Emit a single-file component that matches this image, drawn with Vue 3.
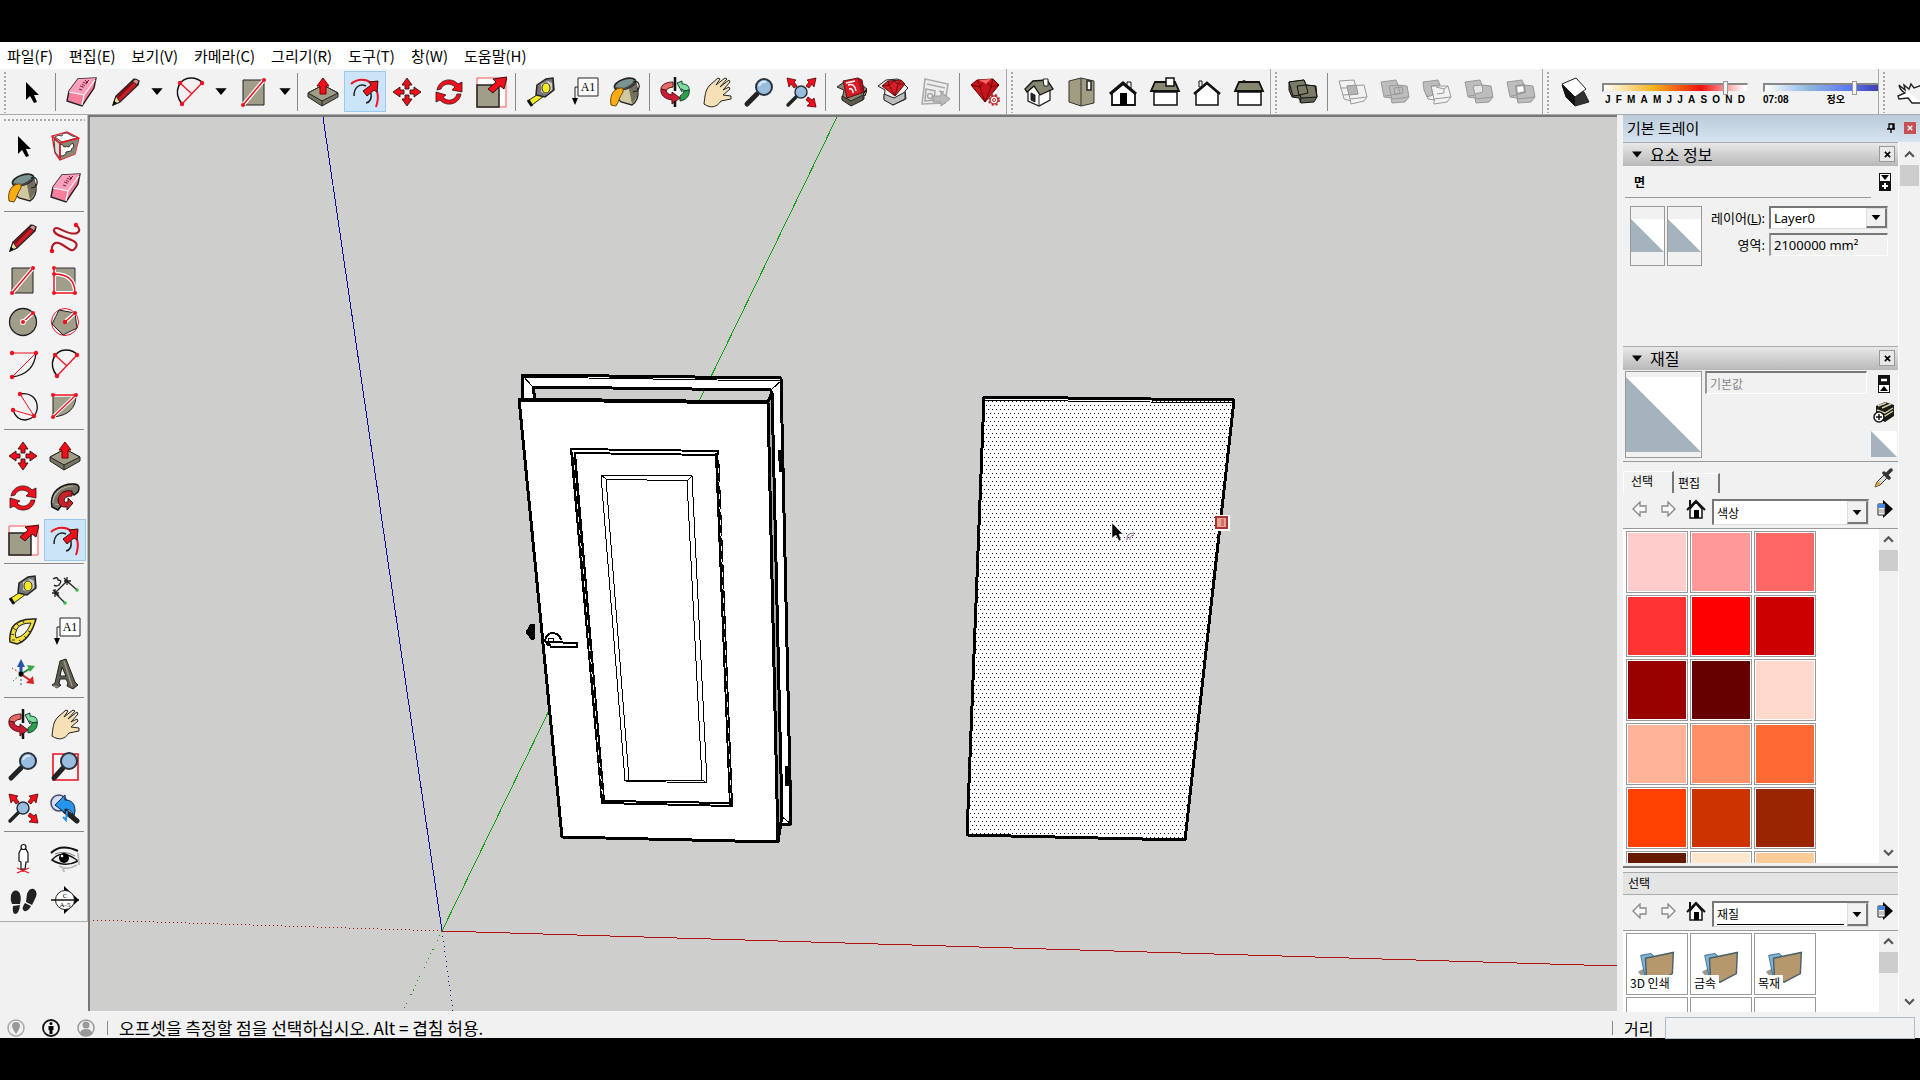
<script setup>
import { ref } from 'vue'

const menus = ['파일(F)', '편집(E)', '보기(V)', '카메라(C)', '그리기(R)', '도구(T)', '창(W)', '도움말(H)']

// 상단 도구 모음
const toolGroups = [
  [
    ['select'],
    ['eraser', 'pencil+', 'arc2+', 'rect+'],
    ['push', 'offset', 'move', 'rotate', 'scale'],
    ['tape', 'text', 'paint'],
    ['orbit', 'pan', 'zoom', 'extents'],
    ['warehouse', 'extension', 'layout'],
    ['ruby'],
  ],
  [['iso', 'top', 'front', 'right', 'back', 'left']],
  [['shell'], ['intersect', 'union', 'subtract', 'trim', 'split']],
]

// 왼쪽 큰 도구 세트
const palette = [
  ['select', 'component', 'paint', 'eraser'],
  ['pencil', 'freehand', 'rect', 'rotrect', 'circle', 'polygon', 'arc', 'arc2', 'arc3', 'pie'],
  ['move', 'push', 'rotate', 'follow', 'scale', 'offset'],
  ['tape', 'dimension', 'protractor', 'text', 'axes', 'text3d'],
  ['orbit', 'pan', 'zoom', 'zoomwin', 'extents', 'previous'],
  ['position', 'look', 'walk', 'section'],
]

const activeTool = ref('offset')
const month = ref(86)
const hour = ref(81)
const months = 'JFMAMJJASOND'.split('')

const swatches = [
  '#ffcccc', '#ff9999', '#ff6666',
  '#ff3333', '#ff0000', '#cc0000',
  '#990000', '#660000', '#ffd9cc',
  '#ffb399', '#ff8f66', '#ff6933',
  '#ff4000', '#cc3300', '#992600',
  '#661a00', '#ffe6cc', '#ffcc99',
]
const folders = ['3D 인쇄', '금속', '목재', '', '', '']

const name = t => t.replace('+', '')
</script>

<template>
  <div class="app">
    <svg class="defs" aria-hidden="true">
      <defs>
        <symbol id="select" viewBox="0 0 32 32"><path d="M11 6v18l4-4 4 7 3-1-3-7h5z" /></symbol>
        <symbol id="eraser" viewBox="0 0 32 32">
          <path d="M13 3 31 2 29 12 17 30 2 25 4 15z" fill="#f77f9c" stroke="#222" stroke-width="1.4" />
          <path d="M13 3 31 2 19 19 4 15z" fill="#ff9fbb" />
          <path d="M4 16l15 3-2 10M19 19 30 4" fill="none" stroke="#fff" stroke-width="1.2" />
          <path d="M14 13l3 1M15 10q4 0 3 2M17 8l3 2M18 6l4 2M20 4l3 3M21 7l3-3" fill="none" stroke="#72243c" />
        </symbol>
        <symbol id="pencil" viewBox="0 0 32 32">
          <path d="M3 29 6 20 24 3 29 5 28 9 10 26z" fill="#c91c25" stroke="#222" stroke-width="1.3" />
          <path d="M3 29 6 20 10 26z" fill="#eedca4" stroke="#222" />
          <path d="M8 21 24 5" stroke="#771118" stroke-width="2" />
          <path d="M3 29l1-4 3 2z" /><path d="M22 5l4-2 3 2-2 4z" fill="#d98e8b" stroke="#222" />
        </symbol>
        <symbol id="arc2" viewBox="0 0 32 32">
          <path d="M8 28C-2 15 6 2 17 2q7 0 12 5" fill="none" stroke="#111" stroke-width="1.5" />
          <path d="M8 28 28 7M6 7l12 11" stroke="#e12" stroke-width="1.3" />
          <g fill="#e12"><circle cx="8" cy="28" r="2.2" /><circle cx="28" cy="7" r="2.2" /><circle cx="6" cy="7" r="2.2" /></g>
        </symbol>
        <symbol id="rect" viewBox="0 0 32 32">
          <path d="M5 4h21v25H5z" fill="#a09d88" stroke="#222" />
          <path d="M5 29 26 4" stroke="#fff" stroke-width="4" /><path d="M5 29 26 4" stroke="#e12" stroke-width="1.5" />
          <g fill="#e12"><circle cx="5" cy="29" r="2" /><circle cx="26" cy="4" r="2" /></g>
        </symbol>
        <symbol id="push" viewBox="0 0 32 32">
          <path d="M1 17 16 9l15 8v4L15 30 1 21z" fill="#777563" stroke="#222" />
          <path d="M1 17 16 9l15 8-16 8z" fill="#a09d88" stroke="#222" /><path d="M15 25v5" stroke="#222" />
          <path d="M16 2l6 8h-3v8h-6v-8h-3z" fill="#f0101c" stroke="#700" />
        </symbol>
        <symbol id="offset" viewBox="0 0 32 32">
          <path d="M2 8C15-3 35 9 27 31" fill="none" stroke="#e12" stroke-width="2" />
          <path d="M5 20c0-9 6-13 12-10m5 7c1 6-1 9-5 10" fill="none" stroke="#222" stroke-width="1.5" />
          <path d="M29 5l-1 11-3-2-7 6-4-5 8-6-2-3z" fill="#f0101c" stroke="#311" />
        </symbol>
        <symbol id="move" viewBox="0 0 32 32">
          <g fill="#f0101c" stroke="#311" stroke-width=".9">
            <path d="M16 2l5 7h-3v4h-4V9h-3z" /><path d="M16 30l5-7h-3v-4h-4v4h-3z" />
            <path d="M2 16l7-5v3h4v4H9v3z" /><path d="M30 16l-7-5v3h-4v4h4v3z" />
          </g>
        </symbol>
        <symbol id="rotate" viewBox="0 0 32 32">
          <g fill="#f0101c" stroke="#311" stroke-width=".8">
            <path d="M4 14C6 3 19 1 25 8l4-2v10l-10-2 3-3C17 6 10 8 8 13z" />
            <path d="M28 18c-2 11-15 13-21 6l-4 2V16l10 3-3 2c4 5 12 4 14-3z" />
          </g>
        </symbol>
        <symbol id="scale" viewBox="0 0 32 32">
          <path d="M2 2h29v29H2z" fill="#fff" stroke="#f55" /><path d="M2 9h22v22H2z" fill="#a09d88" stroke="#222" stroke-width="1.5" />
          <path d="M32 1l-3 12-4-3-7 7-5-4 8-7-3-3z" fill="#f0101c" stroke="#311" />
        </symbol>
        <symbol id="tape" viewBox="0 0 32 32">
          <path d="M4 24l11-7 4 3L7 29z" fill="#f4e92a" stroke="#222" /><path d="M3 24l4 6" stroke="#111" stroke-width="3" />
          <path d="M12 9l9-6 7-1 1 12-9 7-9-2z" fill="#777" stroke="#222" stroke-width="1.5" />
          <path d="M16 8l7-3 4 2v7l-6 4-5-2z" fill="#ccc" /><ellipse cx="21" cy="12" rx="4" ry="5" fill="#f4ec20" stroke="#333" />
        </symbol>
        <symbol id="text" viewBox="0 0 32 32">
          <path d="M11 2h20v18H11z" fill="#fff" stroke="#222" /><path d="M11 11H8v13" fill="none" stroke="#222" />
          <path d="M5 22h6l-3 7z" /><text x="21" y="15" font-size="12" font-family="Liberation Serif, serif" text-anchor="middle">A1</text>
        </symbol>
        <symbol id="paint" viewBox="0 0 32 32">
          <path d="M6 10q1 13 6 16l11 3q7-5 6-14L26 4z" fill="#cfc8a0" stroke="#222" stroke-width="1.3" />
          <path d="M20 13l3 15 5-7V10l-2-5z" fill="#746f5c" />
          <ellipse cx="16" cy="8" rx="11" ry="5" fill="#7b9391" stroke="#222" stroke-width="1.6" transform="rotate(-18 16 8)" />
          <path d="M7 12q9 4 19-6" fill="none" stroke="#444" stroke-width="2" />
          <path d="M24 6c6-3 8 5 4 9l-4 1" fill="none" stroke="#222" stroke-width="1.2" />
          <path d="M14 12C6 11 0 18 2 29l5 1c3-4 3-9 7-14z" fill="#fbac12" stroke="#6b4a08" />
        </symbol>
        <symbol id="orbit" viewBox="0 0 32 32">
          <path d="M14 6C7 6 2 9 2 13l5 4q-1-5 7-6z" fill="#e56a6a" stroke="#511" />
          <path d="M18 7l5-2v3c6 0 8 3 7 8l-6-2q-2-2-1-1v3z" fill="#7edb9e" stroke="#143" />
          <path d="M30 14c1 6-3 10-9 11v-5q4-2 4-5z" fill="#2b9f4b" stroke="#143" />
          <path d="M2 13c-1 6 4 10 11 11v4l8-6-8-6v3q-6-1-6-5z" fill="#c91c35" stroke="#511" />
          <path d="M16 1v14M16 25v6" stroke="#111" stroke-width="2.5" />
        </symbol>
        <symbol id="pan" viewBox="0 0 32 32">
          <path d="M3 28C4 20 4 14 9 9l8-7 2 1-4 6L24 2l2 1-7 8 9-7 1 2-7 8 6-3 1 2-7 6 8 1v3l-10 2c-4 6-10 8-17 3z" fill="#f6e0b5" stroke="#222" />
        </symbol>
        <symbol id="zoom" viewBox="0 0 32 32">
          <path d="M4 28l10-10" stroke="#222" stroke-width="5" stroke-linecap="round" />
          <circle cx="21" cy="11" r="8" fill="#98bddf" stroke="#2a333c" stroke-width="2" /><path d="M16 10q2-5 7-4" fill="none" stroke="#d7eaff" stroke-width="2" />
        </symbol>
        <symbol id="extents" viewBox="0 0 32 32">
          <path d="M3 29l9-9" stroke="#222" stroke-width="3.5" stroke-linecap="round" />
          <circle cx="16" cy="16" r="6" fill="#98bddf" stroke="#2a333c" stroke-width="1.5" />
          <g fill="#f0101c" stroke="#500" stroke-width=".8">
            <path d="M2 2l9 2-2 2 3 4-3 2-3-4-2 3z" /><path d="M31 2l-9 2 2 2-3 4 3 2 3-4 2 3z" /><path d="M31 31l-2-9-2 2-4-3-2 3 4 3-3 3z" />
          </g>
        </symbol>
        <symbol id="warehouse" viewBox="0 0 32 32">
          <path d="M2 11l7 3-2 9 9 6 13-6v-7l3-3-6-5-17-2z" fill="#8b8878" stroke="#222" />
          <path d="M8 5 23 2l4 15-15 5z" fill="#d91d28" stroke="#511" /><path d="M23 2l4 2 2 12-3 1" fill="#a8131d" stroke="#511" />
          <path d="M13 9q7-2 8 6M14 13q4-1 4 4M11 7l9-2" fill="none" stroke="#fff" stroke-width="1.5" />
          <path d="M7 20l9 5 12-6v5l-12 6-9-6z" fill="#5d5b4e" stroke="#222" /><path d="M28 18l4-4-2 6z" fill="#8b8878" stroke="#222" />
        </symbol>
        <symbol id="extension" viewBox="0 0 32 32">
          <path d="M1 10l7 4-1 9 9 6 13-6-1-8 3-3-6-6-4-3-12 1z" fill="#eee" stroke="#222" />
          <path d="M5 10l6-5 13-1 4 4-10 12z" fill="#d91d28" stroke="#511" /><path d="M5 10l7-1 6 11 3-12 7 0M11 5l1 4 5-4 4 3 3-4" fill="none" stroke="#611" />
          <path d="M7 18l10 4 11-6v7l-12 6-9-5z" fill="#bbb" stroke="#222" />
        </symbol>
        <symbol id="layout" viewBox="0 0 32 32">
          <g fill="#eee" stroke="#aaa" stroke-width="1.6"><path d="M6 3l23 5-3 19-23 1z" /><path d="M8 8l18 4M7 13l9 2-1 9-9 1zM20 15l5 1" /><circle cx="11" cy="20" r="2.5" /></g>
          <path d="M14 20h8v-4l9 7-9 7v-4h-8z" fill="#bbb" stroke="#999" />
        </symbol>
        <symbol id="ruby" viewBox="0 0 32 32">
          <path d="M2 9l6-5 16-1 6 6-14 17z" fill="#c6141f" stroke="#600" />
          <path d="M2 9l9 2 5 15 6-15 8-2M8 4l3 7 5-7 6 7 2-8" fill="none" stroke="#700" /><path d="M10 4l12-1-5 5z" fill="#f46a6a" />
          <circle cx="25" cy="24" r="5" fill="#f2f2f2" stroke="#b33" stroke-width="2" stroke-dasharray="2 2" /><circle cx="25" cy="24" r="4" fill="#f2f2f2" stroke="#b33" stroke-width="1.5" /><circle cx="25" cy="24" r="1.5" fill="none" stroke="#b33" />
        </symbol>
        <symbol id="iso" viewBox="0 0 32 32">
          <path d="M5 14v11l11 5 11-6V13L15 7z" fill="#fff" stroke="#222" stroke-width="1.3" /><path d="M16 19v11M8 17l4 2v7l-4-2z" fill="#222" stroke="#222" />
          <path d="M2 13 10 5l14-1 6 9-13 6-6-9-7 6z" fill="#87866f" stroke="#111" stroke-width="1.3" /><path d="M20 3h5v7h-4z" fill="#fff" stroke="#222" />
        </symbol>
        <symbol id="top" viewBox="0 0 32 32">
          <path d="M4 5l12-3 13 3v22l-13 3-12-4z" fill="#a09d82" stroke="#333" /><path d="M16 2v28" stroke="#333" /><path d="M22 5h4v9h-4z" fill="#fff" stroke="#222" stroke-width="1.5" />
        </symbol>
        <symbol id="front" viewBox="0 0 32 32">
          <path d="M20 6h4v6h-4z" fill="#fff" stroke="#111" /><path d="M5 17v12h23V17L16 8z" fill="#fff" stroke="#111" stroke-width="1.8" />
          <path d="M3 18 16 7l13 11" fill="none" stroke="#111" stroke-width="3" /><path d="M13 17h7v12h-7z" />
        </symbol>
        <symbol id="right" viewBox="0 0 32 32">
          <path d="M5 16h23v13H5z" fill="#fff" stroke="#111" stroke-width="1.5" /><path d="M2 15 6 6h20l4 9z" fill="#87866f" stroke="#111" stroke-width="1.8" />
          <path d="M17 2h8v8h-8z" fill="#fff" stroke="#111" stroke-width="1.5" />
        </symbol>
        <symbol id="back" viewBox="0 0 32 32">
          <path d="M8 5h3v6H8z" fill="#fff" stroke="#111" /><path d="M5 17v12h22V17L16 7z" fill="#fff" stroke="#111" stroke-width="1.5" /><path d="M3 18 16 7l13 11" fill="none" stroke="#111" stroke-width="2.5" />
        </symbol>
        <symbol id="left" viewBox="0 0 32 32">
          <path d="M8 6q3-3 6 0" fill="none" stroke="#111" /><path d="M5 16h23v13H5z" fill="#fff" stroke="#111" stroke-width="1.5" />
          <path d="M2 15 6 6h20l4 9z" fill="#87866f" stroke="#111" stroke-width="1.8" />
        </symbol>
        <symbol id="shell" viewBox="0 0 32 32">
          <path d="M2 6 17 4l2 5 10 1 1 11-3 5-13 1-2-5-7-1-3-7z" fill="#626252" stroke="#111" />
          <path d="M2 6 17 4l2 5 9 1 2 11-16 1-1-3-7 1z" fill="#7c7b68" stroke="#111" /><path d="M10 10l9-1 2 8-9 2zM14 22l-1 5" fill="none" stroke="#111" />
        </symbol>
        <symbol id="intersect" viewBox="0 0 32 32">
          <g fill="none" stroke="#999"><path d="M2 5l15-1 4 14-15 1zM10 10l17-1 3 12-17 2zM6 19l1 4 7 2M30 21l-3 4-13 3-1-5M3 12h7" /><path d="M10 10l9-1 2 9-9 1z" fill="#b5b5b5" /></g>
        </symbol>
        <symbol id="union" viewBox="0 0 32 32">
          <g stroke="#999" fill="#bdbdbd"><path d="M2 6 17 4l2 5 9 1 2 11-4 5-13 1-1-5-7-1z" /><path d="M30 21l-17 2-1-4-6 1M10 10l9-1 2 8-9 2zM15 12l8-1 1 6-8 2z" fill="none" /></g>
        </symbol>
        <symbol id="subtract" viewBox="0 0 32 32">
          <g stroke="#999" fill="none"><path d="M2 6 17 4l2 5-9 1 2 9-6 2-3-7z" fill="#bdbdbd" /><path d="M10 10l17 0 3 11-17 2zM15 11l8 2 4-3M16 18l7-1v-4M30 21l-4 5-13 2v-5" /><path d="M6 19l1 4 7 1" /></g>
        </symbol>
        <symbol id="trim" viewBox="0 0 32 32">
          <g stroke="#999" fill="#bdbdbd"><path d="M2 6 17 4l2 5 9 1 2 11-4 5-13 1-1-5-7-1z" /><path d="M10 10l9-1 1 7-8 2z" fill="#e6e6e6" /><path d="M30 21l-17 2-1-4-6 1" fill="none" /></g>
        </symbol>
        <symbol id="split" viewBox="0 0 32 32">
          <g stroke="#999" fill="#bdbdbd"><path d="M2 6 17 4l2 5 9 1 2 11-4 5-13 1-1-5-7-1z" /><path d="M11 10l8-1 1 7-8 2z" fill="#fff" stroke-width="2" /><path d="M30 21l-17 2-1-4-6 1" fill="none" /></g>
        </symbol>
        <symbol id="shadow" viewBox="0 0 32 32">
          <path d="M3 9l4 12 9 9 14-4-5-10z" fill="#333" stroke="#222" /><path d="M3 8l14-6 10 11-11 8z" fill="#fff" stroke="#222" />
          <path d="M3 9l4 12 9 9v-9z" fill="#111" />
        </symbol>
        <symbol id="glove" viewBox="0 0 32 32">
          <path d="M4 9l6 5-1-5 5 4 2-5 3 4 8-3M4 9q1 5 6 8l-7 3 1 3 9-1 4 5h10" fill="#fff" stroke="#222" stroke-width="1.4" />
        </symbol>
        <symbol id="component" viewBox="0 0 32 32">
          <path d="M3 6 18 2l12 6-4 16-15 6-5-7z" fill="#c9c9c5" stroke="#e12" stroke-width="1.2" /><path d="M11 13l19-5-4 16-15 6z" fill="#8a8875" />
          <path d="M6 7q3-3 7-1 0-3 5-3l5 3q4 0 5 2l-15 4z" fill="#fff" stroke="#444" /><path d="M5 9l6 5v14l-5-6z" fill="#ddd" stroke="#444" />
          <path d="M11 14q3 0 4 3 3-1 5 0 1-3 4-4l1 4q-3 1-3 4l-5 1q0 4-6 4z" fill="#fff" stroke="#333" />
          <path d="M3 6l8 7 19-5M11 13v17" fill="none" stroke="#e12" stroke-width="1.5" />
        </symbol>
        <symbol id="freehand" viewBox="0 0 32 32">
          <path d="M3 30C2 22 6 19 12 22c8 4 11 10 15 3 5-9-23-9-22-17C6 1 20 15 28 11q5-3-1-8" fill="none" stroke="#b21823" stroke-width="2" />
          <g fill="#f0101c"><circle cx="3" cy="29" r="2.2" /><circle cx="27" cy="3" r="2.2" /></g>
        </symbol>
        <symbol id="rotrect" viewBox="0 0 32 32">
          <path d="M5 4h21v25H5z" fill="#a09d88" stroke="#333" /><path d="M5 3v26h21q0-19-21-19" fill="none" stroke="#fff" stroke-width="4" />
          <path d="M5 3v26h21q0-19-21-19" fill="none" stroke="#e12" stroke-width="1.5" />
          <g fill="#e12"><circle cx="5" cy="4" r="2" /><circle cx="5" cy="10" r="2" /><circle cx="5" cy="29" r="2" /><circle cx="26" cy="29" r="2" /></g>
        </symbol>
        <symbol id="circle" viewBox="0 0 32 32">
          <circle cx="16" cy="16" r="13.5" fill="#a09d88" stroke="#222" stroke-width="1.3" /><path d="M16 16 26 7" stroke="#fff" stroke-width="4" /><path d="M16 16 26 7" stroke="#e12" stroke-width="1.4" />
          <circle cx="16" cy="16" r="3" fill="#fff" /><g fill="#e12"><circle cx="16" cy="16" r="2" /><circle cx="26" cy="7" r="2" /></g>
        </symbol>
        <symbol id="polygon" viewBox="0 0 32 32">
          <circle cx="16" cy="16" r="13.5" fill="#fff" stroke="#e12" /><path d="M3 18 10 4l16 3 2 15-14 7z" fill="#a09d88" stroke="#222" />
          <path d="M16 16 26 7" stroke="#fff" stroke-width="4" /><path d="M16 16 26 7" stroke="#e12" stroke-width="1.4" /><g fill="#e12"><circle cx="16" cy="16" r="2.2" /><circle cx="26" cy="7" r="2" /></g>
        </symbol>
        <symbol id="arc" viewBox="0 0 32 32">
          <path d="M5 29Q27 26 29 5" fill="none" stroke="#111" stroke-width="1.3" /><path d="M5 5h24L5 29" fill="none" stroke="#e12" />
          <g fill="#e12"><circle cx="5" cy="5" r="2.2" /><circle cx="29" cy="5" r="2.2" /><circle cx="5" cy="29" r="2.2" /></g>
        </symbol>
        <symbol id="arc3" viewBox="0 0 32 32">
          <path d="M13 4c21-4 23 25 5 26-7 0-10-4-12-10" fill="none" stroke="#111" stroke-width="1.3" /><path d="M13 4l14 22-21-6" fill="none" stroke="#e12" />
          <g fill="#e12"><circle cx="13" cy="4" r="2.2" /><circle cx="27" cy="26" r="2.2" /><circle cx="6" cy="20" r="2.2" /></g>
        </symbol>
        <symbol id="pie" viewBox="0 0 32 32">
          <path d="M4 5h23Q27 25 4 27z" fill="#a09d88" stroke="#222" /><path d="M4 27 27 5H4" fill="none" stroke="#fff" stroke-width="3.5" /><path d="M4 27 27 5H4" fill="none" stroke="#e12" stroke-width="1.4" />
          <g fill="#e12"><circle cx="4" cy="5" r="2" /><circle cx="27" cy="5" r="2" /><circle cx="4" cy="27" r="2" /></g>
        </symbol>
        <symbol id="follow" viewBox="0 0 32 32">
          <path d="M3 25C0 10 12 1 26 2q6 1 3 8l-4 3-3-3c-7 1-9 6-9 13l-4 5z" fill="#777563" stroke="#111" stroke-width="1.5" />
          <path d="M4 21c0-9 7-16 20-17M13 23l-7-1" fill="none" stroke="#b5b29d" stroke-width="1.2" />
          <path d="M9 17Q12 7 23 9v5q-8 0-8 5 1 2 4 1v-4l5 5-6 7v-3q-9 1-9-8z" fill="#c9202a" stroke="#311" />
        </symbol>
        <symbol id="dimension" viewBox="0 0 32 32">
          <path d="M6 19 18 7M18 7l10 9M6 19l10 10M3 19h7M15 7h7M6 15v8M18 3v8M4 16l6 6M15 4l6 6" stroke="#222" fill="none" stroke-width="1.3" />
          <path d="M4 5q5-3 5 1 5 0 1 5-3 2-5 0" fill="none" stroke="#222" stroke-width="1.4" /><circle cx="28" cy="16" r="1.8" fill="#3b4" /><circle cx="16" cy="29" r="1.8" fill="#3b4" />
        </symbol>
        <symbol id="protractor" viewBox="0 0 32 32">
          <path d="M29 3Q11 2 5 12 2 20 3 26l7 2Q23 24 29 3z" fill="#f1df3c" stroke="#222" stroke-width="1.5" />
          <path d="M24 7Q13 7 10 13 7 18 9 22 19 20 24 7z" fill="#f3f3f3" stroke="#222" />
          <path d="M6 12l3 2M10 8l2 2M16 5l1 2M4 18l3 1M5 24h3M12 24l2 2M17 20l2 2M21 15l3 1" stroke="#333" />
        </symbol>
        <symbol id="axes" viewBox="0 0 32 32">
          <path d="M14 16V6" stroke="#2255aa" stroke-width="3" /><path d="M10 9l4-8 4 8z" fill="#25a" /><path d="M14 16l10-6" stroke="#283" stroke-width="2" /><path d="M20 7l8 1-5 6z" fill="#3a4" />
          <path d="M14 16l10 7" stroke="#c22" stroke-width="2" /><path d="M26 18l1 8-8-1z" fill="#d22" /><path d="M14 17v11" stroke="#25a" stroke-dasharray="2" /><path d="M13 15 5 10" stroke="#c22" stroke-dasharray="2" /><path d="M13 17l-7 6" stroke="#283" stroke-dasharray="2" />
          <circle cx="14" cy="16" r="2.5" />
        </symbol>
        <symbol id="text3d" viewBox="0 0 32 32">
          <path d="M3 27l3-2L11 3l6-2 9 23 3 3-5 4-6-3 1-3-2-4h-6l-1 5 2 1-4 3z" fill="#5f5e50" stroke="#222" /><path d="M11 18l2-9 4 9z" fill="#eee" stroke="#222" /><path d="M15 3l8 25M4 28l5 1" stroke="#99968a" stroke-width="1.5" />
        </symbol>
        <symbol id="zoomwin" viewBox="0 0 32 32">
          <path d="M4 4h25v26H4z" fill="none" stroke="#e12" stroke-width="1.6" /><path d="M5 28l9-10" stroke="#222" stroke-width="5" stroke-linecap="round" />
          <circle cx="20" cy="11" r="8" fill="#98bddf" stroke="#2a333c" stroke-width="2" />
        </symbol>
        <symbol id="previous" viewBox="0 0 32 32">
          <circle cx="10" cy="11" r="8" fill="#cddff0" stroke="#446" stroke-width="1.5" /><path d="M16 19l12 10" stroke="#222" stroke-width="5" stroke-linecap="round" />
          <path d="M6 13l10-10v5c7 0 10 4 10 11l-1 5c-3-6-5-7-9-7v4z" fill="#2795ec" stroke="#124" /><path d="M18 19l-1 9-3-3" fill="none" stroke="#2795ec" stroke-width="2" />
        </symbol>
        <symbol id="position" viewBox="0 0 32 32">
          <path d="M10 26l12 5M22 26l-12 5M16 24v6" stroke="#e12" stroke-width="1.3" /><path d="M14 7h5l2 4v9h-2l-1 7h-4v-7l-2-1v-8z" fill="#fff" stroke="#111" stroke-width="1.2" />
          <circle cx="16.5" cy="5" r="2.5" fill="#fff" stroke="#111" stroke-width="1.2" />
        </symbol>
        <symbol id="look" viewBox="0 0 32 32">
          <path d="M3 18Q13 6 29 19 16 26 3 18z" fill="#eee" stroke="#111" stroke-width="1.5" /><circle cx="15" cy="16" r="5" /><circle cx="13" cy="14" r="1.3" fill="#fff" />
          <path d="M2 11Q12 1 29 9" fill="none" stroke="#111" stroke-width="2" /><path d="M6 12q10-4 20 2" fill="none" stroke="#777" /><path d="M10 24q8 5 18-1M14 26l1 4M29 11l1 12" stroke="#bbb" fill="none" stroke-width="2" />
        </symbol>
        <symbol id="walk" viewBox="0 0 32 32">
          <path d="M4 11q3-7 8-3 3 4 1 12H5q-2-4-1-9zM6 22l7-1q-1 9-5 9-3-1-2-8zM20 10q2-6 7-5 5 3 0 12l-2 4-6-3zM18 19l6 3q-3 6-7 5-3-3 1-8z" fill="#222" />
        </symbol>
        <symbol id="section" viewBox="0 0 32 32">
          <path d="M15 2l15 14-15 14z" /><circle cx="16" cy="16" r="9.5" fill="#fff" stroke="#222" /><path d="M2 16h28" stroke="#111" stroke-width="1.5" />
          <g font-size="7" font-family="Liberation Serif, serif" text-anchor="middle"><text x="16" y="14">C</text><text x="16" y="23">A-5</text></g>
        </symbol>
        <symbol id="nav-back" viewBox="0 0 16 16"><path d="M1 8l7-7v4h6v6H8v4z" fill="#f8f8f8" stroke="#888" stroke-width="1.3" /></symbol>
        <symbol id="nav-next" viewBox="0 0 16 16"><path d="M15 8L8 1v4H2v6h6v4z" fill="#f8f8f8" stroke="#888" stroke-width="1.3" /></symbol>
        <symbol id="home" viewBox="0 0 20 20"><path d="M4 10v9h12v-9l-6-7z" fill="#fff" stroke="#111" stroke-width="1.5" /><path d="M1 11l9-9 9 9M4 7V1" fill="none" stroke="#111" stroke-width="2" /><path d="M8 11h5v8H8z" /></symbol>
        <symbol id="detail" viewBox="0 0 18 18"><path d="M7 0l10 9-10 9z" /><path d="M2 4h7v11H2z" fill="#fff" stroke="#222" /><path d="M2 4h7v4H2z" fill="#48d" /><path d="M3 10h5M3 12h5" stroke="#888" /></symbol>
        <symbol id="dropper" viewBox="0 0 20 20"><path d="M1 19l2-5 9-9 3 3-9 9z" fill="#ddd" stroke="#333" /><path d="M1 19l2-4 4-2-2 4z" fill="#e6a630" /><path d="M10 5l5 5M12 7l5-5" stroke="#333" stroke-width="3.5" stroke-linecap="round" /></symbol>
        <symbol id="box" viewBox="0 0 22 22"><path d="M3 5l9-4 9 3v11l-9 6-9-5z" fill="#1b1b14" /><path d="M5 5l8-3M9 7l9-4M4 9l8 3 8-5M4 12l8 3 8-5" stroke="#d8d3ad" fill="none" stroke-width="1.4" /><circle cx="6" cy="16" r="5" fill="#fff" stroke="#111" stroke-width="1.5" /><path d="M3 16h6M6 13v6" stroke="#111" stroke-width="1.5" /></symbol>
        <symbol id="more" viewBox="0 0 12 18"><path d="M0 0h12v18H0z" fill="#111" /><path d="M1 1h10v7H1z" fill="#fff" /><path d="M2 2h8L6 7z" /><path d="M3 13h6M6 10v6" stroke="#fff" stroke-width="2" /></symbol>
        <symbol id="less" viewBox="0 0 12 18"><path d="M0 0h12v18H0z" fill="#111" /><path d="M1 10h10v7H1z" fill="#fff" /><path d="M2 16h8l-4-5z" /><path d="M3 5h6" stroke="#fff" stroke-width="2.5" /></symbol>
        <symbol id="thumb" viewBox="0 0 26 26"><path d="M0 0h26v26H0z" fill="#fff" /><path d="M0 0l26 26H0z" fill="#a5b3bc" /></symbol>
        <symbol id="chev-up" viewBox="0 0 10 10"><path d="M1 7l4-4 4 4" fill="none" stroke="#555" stroke-width="2" /></symbol>
        <symbol id="chev-down" viewBox="0 0 10 10"><path d="M1 3l4 4 4-4" fill="none" stroke="#555" stroke-width="2" /></symbol>
        <symbol id="tri" viewBox="0 0 10 8"><path d="M0 1h10L5 7z" /></symbol>
        <symbol id="cross" viewBox="0 0 8 8"><path d="M1 1l6 6M7 1L1 7" fill="none" stroke="currentColor" stroke-width="1.8" /></symbol>
        <symbol id="folder" viewBox="0 0 60 50">
          <path d="M10 33l8-4 2 12h-3z" fill="#999" /><path d="M13 16l11-2 3 3 4 18-13 5z" fill="#7db3d8" stroke="#47708d" />
          <path d="M18 19l29-6-1 22-17 9-10-5z" fill="#b5986b" stroke="#4a5f6b" stroke-width="1.5" />
        </symbol>
      </defs>
    </svg>

    <nav class="menubar">
      <button v-for="m in menus" :key="m">{{ m }}</button>
    </nav>

    <div class="toolbar">
      <div v-for="(bar, b) in toolGroups" :key="b" class="bar">
        <i class="grip"></i>
        <template v-for="(group, g) in bar" :key="g">
          <i v-if="g" class="sep"></i>
          <template v-for="t in group" :key="t">
            <span v-if="t.endsWith('+')" class="split-tool">
              <button class="tool" :aria-label="name(t)"><svg><use :href="'#' + name(t)" /></svg></button>
              <button class="more" :aria-label="name(t) + ' 옵션'"><svg><use href="#tri" /></svg></button>
            </span>
            <button v-else class="tool" :class="{ active: t === activeTool }" :aria-label="t" @click="activeTool = t">
              <svg><use :href="'#' + t" /></svg>
            </button>
          </template>
        </template>
      </div>
      <div class="bar">
        <i class="grip"></i>
        <button class="tool" aria-label="그림자"><svg><use href="#shadow" /></svg></button>
        <div class="slider">
          <input v-model="month" type="range" aria-label="날짜" />
          <div class="ticks"><span v-for="(m, i) in months" :key="i">{{ m }}</span></div>
        </div>
        <div class="slider hour">
          <input v-model="hour" type="range" aria-label="시간" />
          <div class="ticks"><span>07:08</span><span>정오</span></div>
        </div>
      </div>
      <div class="bar">
        <i class="grip"></i>
        <button class="tool" aria-label="상호작용"><svg><use href="#glove" /></svg></button>
      </div>
    </div>

    <div class="main">
      <aside class="palette">
        <div class="palette-box">
          <i class="hgrip"></i>
          <div v-for="(group, i) in palette" :key="i" class="tool-set">
            <button v-for="t in group" :key="t" class="tool" :class="{ active: t === activeTool }" :aria-label="t" @click="activeTool = t">
              <svg><use :href="'#' + t" /></svg>
            </button>
          </div>
        </div>
      </aside>

      <div class="viewport">
        <svg viewBox="90 117 1527 894" preserveAspectRatio="xMidYMid slice">
          <defs>
            <pattern id="stipple" width="4" height="8" patternUnits="userSpaceOnUse">
              <path d="M0 1h1v1H0zM2 5h1v1H2z" fill="#113" />
            </pattern>
          </defs>
          <!-- 축 -->
          <g fill="none" shape-rendering="crispEdges">
            <path d="M323 117 442 931" stroke="#0c0c9c" />
            <path d="M442 931l11 80" stroke="#0c0c9c" stroke-dasharray="1 4" />
            <path d="M837 117 442 931" stroke="#12a012" />
            <path d="M442 931l-39 80" stroke="#12a012" stroke-dasharray="1 4" />
            <path d="M442 931 1617 966" stroke="#b01212" />
            <path d="M442 931 90 920" stroke="#b01212" stroke-dasharray="1 3" />
          </g>
          <!-- 문틀 -->
          <g stroke="#000" stroke-width="3" stroke-linejoin="round" shape-rendering="crispEdges">
            <path d="M522 375 781 378 791 824 780 824 771 390 533 387 535 400 523 400z" fill="#fff" />
            <path d="M523 377 782 381" stroke-width="1" />
            <path d="M523 376l10 11M771 390l11-10M781 816l10 8" stroke-width="1" />
            <path d="M780 450l1 22M787 766v20" stroke-width="4" />
            <path d="M768 402 778 842 782 816 772 392z" fill="#aaa" />
          </g>
          <!-- 문짝 -->
          <g stroke="#000" fill="#fff" stroke-linejoin="round" shape-rendering="crispEdges">
            <path d="M519 399 768 402 778 842 562 837z" stroke-width="3" />
            <path d="M520 401 768 404" stroke-width="1" />
            <path d="M571 449 718 451 732 806 602 803z" stroke-width="2" />
            <path d="M575 453 716 455 730 803 604 801z" stroke-width="2" />
            <path d="M573 452 603 802M717 453l14 352" fill="none" stroke-width="4" />
            <path d="M573 452 603 802M718 455l13 348" fill="none" stroke="#fff" stroke-width="1" stroke-dasharray="5 8" />
            <path d="M601 475 692 476 707 783 625 781z" />
            <path d="M606 479 687 481 702 780 629 780zM601 475l5 4M692 476l-5 5M707 783l-5-3M625 781l4-1" />
            <path d="M545 641q1-8 8-8 7 1 8 7" stroke-width="2" /><circle cx="551" cy="641" r="3" />
            <path d="M544 640l5 6M548 642 577 643v4h-26z" stroke-width="2" />
            <path d="M526 632l5-8h3v15h-3z" fill="#000" />
          </g>
          <!-- 선택된 면 -->
          <g stroke="#000" stroke-linejoin="round" shape-rendering="crispEdges">
            <path d="M984 397 1234 400 1185 840 967 835z" fill="#fff" />
            <path d="M984 397 1234 400 1185 840 967 835z" fill="url(#stipple)" stroke-width="3" />
            <path d="M984 400 1233 403" stroke-width="1" />
          </g>
          <path d="M1215 515h15v16h-15z" fill="#fff" />
          <path d="M1216 517h11v11h-11z" fill="#f0a090" stroke="#a33" stroke-width="2" /><path d="M1221 519h3v7h-3z" fill="#c87868" />
          <path d="M1112 523v15l4-3 3 6 2-1-2-6h4z" stroke="#fff" stroke-width=".5" />
          <path d="M1127 540q-1-7 7-7M1130 540q-1-4 4-5" fill="none" stroke="#868" />
        </svg>
      </div>

      <aside class="tray">
        <header class="tray-title">
          <span>기본 트레이</span>
          <button class="pin" aria-label="고정"><svg viewBox="0 0 10 10"><path d="M3 1h5v5H3zM1 6h8M5 6v4M7 1v5" fill="none" stroke="#000" stroke-width="1.3" /></svg></button>
          <button class="close-red" aria-label="닫기"><svg><use href="#cross" /></svg></button>
        </header>
        <div class="tray-body">
          <div class="sections">
            <section class="info">
              <h2 class="head"><svg><use href="#tri" /></svg>요소 정보<button aria-label="닫기"><svg><use href="#cross" /></svg></button></h2>
              <div class="entity">
                <b>면</b>
                <button class="detail-btn" aria-label="세부 정보"><svg><use href="#more" /></svg></button>
              </div>
              <div class="props">
                <span class="preview"><svg><use href="#thumb" /></svg></span>
                <span class="preview"><svg><use href="#thumb" /></svg></span>
                <div class="fields">
                  <label for="layer">레이어(<u>L</u>):</label>
                  <span class="combo"><select id="layer"><option>Layer0</option></select><i><svg><use href="#tri" /></svg></i></span>
                  <label for="area">영역:</label>
                  <input id="area" class="sunken" value="2100000 mm²" readonly />
                </div>
              </div>
            </section>

            <section class="material">
              <h2 class="head"><svg><use href="#tri" /></svg>재질<button aria-label="닫기"><svg><use href="#cross" /></svg></button></h2>
              <div class="current">
                <span class="preview big"><svg><use href="#thumb" /></svg></span>
                <input class="sunken" value="기본값" disabled aria-label="재질 이름" />
                <div class="current-tools">
                  <button aria-label="보조 창"><svg class="s-less"><use href="#less" /></svg></button>
                  <button aria-label="재질 만들기"><svg class="s-box"><use href="#box" /></svg></button>
                  <button aria-label="기본 재질"><svg class="s-thumb"><use href="#thumb" /></svg></button>
                </div>
              </div>
              <div class="tabs">
                <button class="on">선택</button>
                <button>편집</button>
                <button class="dropper" aria-label="샘플"><svg><use href="#dropper" /></svg></button>
              </div>
              <div class="browse">
                <button aria-label="뒤로"><svg class="s16"><use href="#nav-back" /></svg></button>
                <button aria-label="앞으로"><svg class="s16"><use href="#nav-next" /></svg></button>
                <button aria-label="홈"><svg class="s20"><use href="#home" /></svg></button>
                <span class="combo"><select aria-label="모음"><option>색상</option></select><i><svg><use href="#tri" /></svg></i></span>
                <button aria-label="세부 정보"><svg class="s18"><use href="#detail" /></svg></button>
              </div>
              <div class="list colors">
                <div class="cells">
                  <button v-for="c in swatches" :key="c" class="cell" :aria-label="c"><i :style="{ background: c }"></i></button>
                </div>
                <div class="scroll"><svg><use href="#chev-up" /></svg><i></i><svg><use href="#chev-down" /></svg></div>
              </div>
              <div class="splitter"></div>
              <div class="sub-title">선택</div>
              <div class="browse">
                <button aria-label="뒤로"><svg class="s16"><use href="#nav-back" /></svg></button>
                <button aria-label="앞으로"><svg class="s16"><use href="#nav-next" /></svg></button>
                <button aria-label="홈"><svg class="s20"><use href="#home" /></svg></button>
                <span class="combo lined"><select aria-label="재질 모음"><option>재질</option></select><i><svg><use href="#tri" /></svg></i></span>
                <button aria-label="세부 정보"><svg class="s18"><use href="#detail" /></svg></button>
              </div>
              <div class="list folders">
                <div class="cells">
                  <button v-for="(f, i) in folders" :key="i" class="cell folder" :aria-label="f || '폴더'">
                    <svg><use href="#folder" /></svg><span v-if="f">{{ f }}</span>
                  </button>
                </div>
                <div class="scroll"><svg><use href="#chev-up" /></svg><i></i></div>
              </div>
            </section>
          </div>
          <div class="scroll outer"><svg><use href="#chev-up" /></svg><i></i><svg><use href="#chev-down" /></svg></div>
        </div>
      </aside>
    </div>

    <footer class="status">
      <svg viewBox="0 0 20 20"><circle cx="10" cy="10" r="8" fill="none" stroke="#aaa" stroke-width="1.5" /><path d="M10 16q-4-6-4-8a4 4 0 0 1 8 0q0 2-4 8z" fill="#999" /></svg>
      <svg viewBox="0 0 20 20"><circle cx="10" cy="10" r="8" fill="none" stroke="#111" stroke-width="1.8" /><circle cx="10" cy="5.5" r="1.5" /><path d="M7.500 8h5v4l-1 0v4H8.500v-4l-1 0z" /></svg>
      <svg viewBox="0 0 20 20"><circle cx="10" cy="10" r="8" fill="none" stroke="#999" stroke-width="1.5" /><circle cx="10" cy="7" r="3.5" fill="#999" /><path d="M4 16q0-5 6-5t6 5l-3 2H7z" fill="#999" /></svg>
      <i class="bar-line"></i>
      <span class="hint">오프셋을 측정할 점을 선택하십시오. Alt = 겹침 허용.</span>
      <i class="bar-line"></i>
      <label for="measure">거리</label>
      <input id="measure" />
    </footer>
  </div>
</template>

<style>
body {
  background: #000;
  overflow: hidden;
}
</style>

<style scoped>
.app {
  box-sizing: border-box;
  height: 100vh;
  padding: 42px 0;
  display: flex;
  flex-direction: column;
  background: #000;
  color: #000;
  font: 12px/16px "Noto Sans CJK KR", sans-serif;
}

.app *,
.app *::before {
  box-sizing: border-box;
}

.defs {
  position: absolute;
  width: 0;
  height: 0;
}

svg {
  display: block;
  flex: none;
}

button {
  padding: 0;
  border: 0;
  background: none;
  color: inherit;
  font: inherit;
}

input,
select {
  font: inherit;
  color: #000;
  border-radius: 0;
  min-width: 0;
}

/* 메뉴 */
.menubar {
  display: flex;
  height: 27px;
  background: #fff;
}

.menubar button {
  padding: 0 9px 0 7px;
  font-size: 15px;
}

/* 도구 모음 */
.toolbar {
  display: flex;
  height: 46px;
  overflow: hidden;
  background: #f2f2f2;
  border-bottom: 1px solid #aaa;
}

.bar {
  display: flex;
  align-items: center;
  flex: none;
  border-right: 1px solid #aaa;
}

.grip {
  width: 4px;
  height: 42px;
  margin: 0 4px 0 3px;
  background: radial-gradient(circle, #aaa 1px, transparent 1px) 0 0 / 4px 4px;
}

.bar:first-child .grip {
  margin-right: 3px;
}

.sep {
  width: 1px;
  height: 38px;
  margin: 0 4px 0 3px;
  background: #888;
}

.tool {
  width: 42px;
  height: 41px;
  display: grid;
  place-items: center;
  border: 1px solid transparent;
}

.tool svg {
  width: 32px;
  height: 32px;
}

.tool.active {
  background: #cce4f7;
  border-color: #99c9ef;
}

.split-tool {
  display: flex;
  padding-left: 3px;
}

.more {
  width: 19px;
  display: grid;
  place-items: center;
}

.more svg {
  width: 12px;
  height: 9px;
}

.slider {
  width: 146px;
  margin-left: 6px;
}

.slider.hour {
  width: 115px;
  margin-left: 15px;
}

.slider input {
  appearance: none;
  display: block;
  width: 100%;
  height: 9px;
  margin: 6px 0 2px;
  border: 1px solid #eee;
  border-top: 2px solid #888;
  border-left: 2px solid #888;
  background: linear-gradient(90deg, #fff, #f4b41c 34%, #f01010 68%, #fff 98%);
}

.slider.hour input {
  border-right: 0;
  background: linear-gradient(90deg, #fff, #8fb8e0 38%, #5a78f0 75%, #3a3fb0);
}

.slider input::-webkit-slider-thumb {
  appearance: none;
  width: 5px;
  height: 14px;
  background: #f4f4f4;
  border: 1px solid #999;
}

.ticks {
  display: flex;
  justify-content: space-between;
  padding: 0 3px;
  font: bold 10px/12px "Liberation Sans", "Noto Sans CJK KR", sans-serif;
}

.hour .ticks {
  padding: 0 33px 0 0;
}

/* 본문 */
.main {
  flex: 1;
  min-height: 0;
  display: flex;
  background: #f1f1f1;
}

.palette {
  width: 88px;
  flex: none;
}

.palette-box {
  padding: 3px 0 0 2px;
  border-bottom: 1px solid #aaa;
  border-right: 1px solid #bbb;
  background: #f3f3f3;
}

.hgrip {
  display: block;
  height: 4px;
  margin: 0 2px 3px 1px;
  background: radial-gradient(circle, #aaa 1px, transparent 1px) 0 0 / 4px 4px;
}

.tool-set {
  display: grid;
  grid-template-columns: 42px 42px;
}

.tool-set + .tool-set::before {
  content: "";
  grid-column: 1 / 3;
  height: 1px;
  margin: 2px 2px 5px;
  background: #888;
}

.tool-set .tool {
  height: 42px;
}

.viewport {
  flex: 1;
  min-width: 0;
  border: 2px solid #777;
  border-width: 2px 0 0 2px;
  background: #cececc;
  margin-bottom: 1px;
}

.viewport svg {
  width: 100%;
  height: 100%;
}

/* 트레이 */
.tray {
  width: 303px;
  flex: none;
  padding-left: 6px;
  display: flex;
  flex-direction: column;
}

.tray-title {
  display: flex;
  align-items: center;
  height: 27px;
  flex: none;
  padding: 0 4px 2px 4px;
  background: linear-gradient(#bccbd9, #d6e4f2);
  font-size: 15px;
}

.tray-title span {
  flex: 1;
}

.pin svg {
  width: 10px;
  height: 10px;
}

.close-red {
  width: 12px;
  height: 12px;
  margin-left: 8px;
  display: grid;
  place-items: center;
  background: #c75050;
  color: #fff;
}

.close-red svg {
  width: 6px;
  height: 6px;
}

.tray-body {
  flex: 1;
  min-height: 0;
  display: flex;
}

.sections {
  flex: 1;
  min-width: 0;
  display: flex;
  flex-direction: column;
  border-right: 1px solid #fff;
}

.info {
  min-height: 204px;
}

.head {
  display: flex;
  align-items: center;
  height: 24px;
  margin: 0;
  padding: 0 3px 1px 9px;
  border-top: 1px solid #aaa;
  background: linear-gradient(#e8e8e8, #b8b8b8);
  font: 16px/20px "Noto Sans CJK KR", sans-serif;
}

.head > svg {
  width: 10px;
  height: 9px;
  margin-right: 8px;
}

.head button {
  width: 16px;
  height: 16px;
  margin-left: auto;
  display: grid;
  place-items: center;
  border: 1px solid #999;
  background: #e8e8e8;
}

.head button svg {
  width: 7px;
  height: 7px;
}

.entity {
  display: flex;
  justify-content: space-between;
  align-items: center;
  height: 32px;
  padding: 0 7px 0 11px;
  background: linear-gradient(#999, #999) 2px 31px / 246px 1px no-repeat;
}

.detail-btn svg,
.s-less {
  width: 12px;
  height: 18px;
}

.props {
  display: flex;
  gap: 2px;
  padding: 8px 10px 0 7px;
}

.preview {
  width: 35px;
  height: 60px;
  border: 1px solid #999;
  flex: none;
}

.preview svg {
  width: 33px;
  height: 33px;
  margin-top: 12px;
}

.fields {
  flex: 1;
  min-width: 0;
  display: grid;
  grid-template-columns: 1fr 119px;
  grid-auto-rows: 23px;
  gap: 4px;
  align-content: start;
  align-items: center;
  font-family: "Noto Sans", "Noto Sans CJK KR", sans-serif;
  font-size: 13px;
  text-align: right;
}

.combo {
  display: flex;
  height: 23px;
  background: #fff;
  border: 1px solid #ddd;
  border-top: 2px solid #777;
  border-left: 2px solid #777;
}

.combo select {
  appearance: none;
  flex: 1;
  border: 0;
  padding: 0 3px;
  background: none;
  outline: 0;
}

.combo i {
  width: 21px;
  display: grid;
  place-items: center;
  background: #f1f1f1;
  border: 1px solid #ddd;
  border-right: 2px solid #777;
  border-bottom: 2px solid #777;
}

.combo i svg {
  width: 10px;
  height: 7px;
}

.sunken {
  width: 100%;
  height: 23px;
  padding: 0 3px;
  background: #f1f1f1;
  border: 1px solid #fff;
  border-top: 2px solid #777;
  border-left: 2px solid #999;
}

.sunken:disabled {
  color: #888;
}

.material {
  flex: 1;
  min-height: 0;
  display: flex;
  flex-direction: column;
}

.material > * {
  flex: none;
}

.current {
  display: flex;
  gap: 3px;
  height: 92px;
  padding: 1px 1px 0 2px;
  border-bottom: 1px solid #999;
}

.preview.big {
  width: 77px;
  height: 87px;
}

.preview.big svg {
  width: 75px;
  height: 75px;
  margin-top: 5px;
}

.current .sunken {
  flex: 1;
  width: 0;
}

.current-tools {
  width: 27px;
  display: flex;
  flex-direction: column;
  align-items: center;
  gap: 8px;
  padding-top: 4px;
}

.s-box {
  width: 22px;
  height: 22px;
}

.s-thumb {
  width: 26px;
  height: 26px;
}

.tabs {
  display: flex;
  align-items: flex-end;
  height: 31px;
  padding-right: 4px;
}

.tabs button {
  height: 20px;
  width: 46px;
  padding-bottom: 2px;
  border-top: 1px solid #fff;
  border-right: 2px solid #777;
}

.tabs .on {
  width: 51px;
  height: 22px;
  padding: 0 12px 4px 0;
  border-left: 1px solid #fff;
}

.tabs button:nth-child(2) {
  padding-right: 14px;
}

.tabs .dropper {
  width: 20px;
  height: 20px;
  margin: 0 0 5px auto;
  border: 0;
}

.dropper svg,
.s20 {
  width: 20px;
  height: 20px;
}

.s18 {
  width: 18px;
  height: 18px;
}

.s16 {
  width: 16px;
  height: 16px;
}

.browse {
  display: flex;
  align-items: flex-start;
  height: 36px;
  padding: 6px 4px 0 9px;
  border-bottom: 1px solid #999;
}

.browse button {
  height: 20px;
  display: grid;
  place-items: center;
}

.browse button:nth-child(2) {
  margin: 0 10px 0 12px;
}

.browse .combo {
  flex: 1;
  height: 26px;
  margin: 0 7px 0 6px;
}

.combo.lined select {
  margin: 0 3px 1px;
  padding: 0;
  border-bottom: 1px solid #000;
}

.list {
  display: flex;
  overflow: hidden;
  background: #fff;
}

.material > .colors {
  flex: 1 1 0;
  min-height: 0;
}

.folders {
  height: 81px;
}

.cells {
  flex: 1;
  display: grid;
  grid-template-columns: repeat(3, 62px);
  grid-auto-rows: 62px;
  gap: 2px;
  padding: 2px 3px;
}

.cell {
  position: relative;
  padding: 1px;
  border: 1px solid #999;
  background: #fff;
}

.cell i {
  display: block;
  height: 100%;
}

.cell.folder svg {
  width: 58px;
  height: 48px;
}

.cell.folder span {
  position: absolute;
  left: 0;
  bottom: 3px;
  padding: 0 3px;
  background: #fff;
}

.scroll {
  width: 19px;
  display: flex;
  flex-direction: column;
  align-items: center;
  background: #f1f1f1;
}

.scroll svg {
  width: 11px;
  height: 11px;
  margin: 5px 0;
}

.scroll i {
  width: 19px;
  height: 21px;
  background: #cdcdcd;
}

.scroll svg:last-child {
  margin-top: auto;
}

.outer {
  width: 21px;
  padding-top: 2px;
}

.splitter {
  height: 6px;
  margin-top: 3px;
  border-top: 2px solid #777;
}

.sub-title {
  height: 23px;
  padding: 2px 5px;
  border: 1px solid #aaa;
  border-width: 1px 0;
  background: #e4e4e4;
}

/* 상태 표시줄 */
.status {
  display: flex;
  align-items: center;
  height: 26px;
  padding: 5px 5px 0 6px;
  background: #f1f1f1;
  font-size: 17px;
}

.status svg {
  width: 20px;
  height: 20px;
  margin-right: 15px;
}

.bar-line {
  width: 1px;
  height: 14px;
  margin: 0 11px 0 -4px;
  background: #888;
}

.hint {
  flex: 1;
}

.status label {
  width: 41px;
  font-size: 16px;
}

.status input {
  width: 250px;
  height: 22px;
  border: 1px solid #b0bccd;
  background: #f1f1f1;
}
</style>
